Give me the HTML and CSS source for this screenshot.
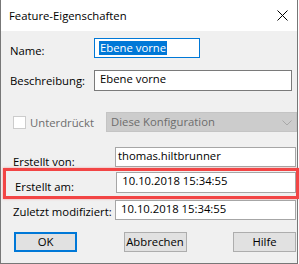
FILE: index.html
```html
<!DOCTYPE html>
<html lang="de">
<head>
  <meta charset="UTF-8">
  <title>Feature-Eigenschaften</title>
  <link rel="stylesheet" href="styles.css">
</head>
<body>

<div class="window">
  <div class="titlebar">
    <span class="title">Feature-Eigenschaften</span>
    <svg class="close" width="11" height="11" viewBox="0 0 11 11">
      <path d="M0.5 0.5 L10.5 10.5 M10.5 0.5 L0.5 10.5" stroke="#000" stroke-width="1"/>
    </svg>
  </div>

  <div class="content">
    <div class="row row-name">
      <span class="label">Name:</span>
      <div class="field field-name"><span class="selected">Ebene vorne</span></div>
    </div>

    <div class="row row-desc">
      <span class="label">Beschreibung:</span>
      <div class="field field-desc">Ebene vorne</div>
    </div>

    <div class="row row-suppress">
      <span class="checkbox"></span>
      <span class="check-label">Unterdrückt</span>
      <div class="combo">
        <span>Diese Konfiguration</span>
        <svg class="chevron" width="10" height="6" viewBox="0 0 10 6">
          <path d="M0.5 0.5 L5 5 L9.5 0.5" fill="none" stroke="#a8a8a8" stroke-width="1"/>
        </svg>
      </div>
    </div>

    <div class="row row-info row-first">
      <span class="label">Erstellt von:</span>
      <div class="field field-info field-user">thomas.hiltbrunner</div>
    </div>

    <div class="highlight">
      <div class="row row-info">
        <span class="label">Erstellt am:</span>
        <div class="field field-info">10.10.2018 15:34:55</div>
      </div>
    </div>

    <div class="row row-info row-last">
      <span class="label">Zuletzt modifiziert:</span>
      <div class="field field-info">10.10.2018 15:34:55</div>
    </div>

    <div class="buttons">
      <button class="btn btn-default">OK</button>
      <button class="btn">Abbrechen</button>
      <button class="btn">Hilfe</button>
    </div>
  </div>
</div>

</body>
</html>
```

FILE: styles.css
```css
* {
  box-sizing: border-box;
  margin: 0;
  padding: 0;
}

body {
  font-family: 'Open Sans', 'Noto Sans', sans-serif;
  font-size: 11.3px;
  line-height: 16px;
  color: #000;
  background: #fff;
}

.window {
  width: 298px;
  height: 264px;
  border: 1px solid #777;
  border-top: none;
  background-color: #f0f0f0;
  display: flex;
  flex-direction: column;
}

.titlebar {
  height: 31px;
  flex-shrink: 0;
  background-color: #fff;
  display: flex;
  align-items: flex-start;
  justify-content: space-between;
  padding: 8px 9px 0 8px;
}

.close {
  margin-top: 2px;
}

.content {
  flex: 1;
  display: flex;
  flex-direction: column;
}

.row {
  display: flex;
  align-items: flex-start;
  height: 20px;
  flex-shrink: 0;
}

.label {
  white-space: nowrap;
}

.field {
  height: 20px;
  background-color: #fff;
  border: 1px solid #7a7a7a;
  white-space: nowrap;
  overflow: hidden;
}

.row-name {
  margin-top: 7px;
  padding-left: 9px;
}

.row-name .label {
  width: 84px;
  margin-top: 5px;
}

.field-name {
  width: 106px;
  border-color: #0078d7;
  padding-left: 4px;
  padding-top: 1px;
}

.selected {
  display: inline-block;
  background-color: #0078d7;
  color: #fff;
  line-height: 14px;
  padding: 0 1px;
}

.row-desc {
  margin-top: 12px;
  height: 21px;
  padding-left: 9px;
}

.row-desc .label {
  width: 84px;
  margin-top: 3px;
}

.field-desc {
  height: 21px;
  width: 198px;
  padding-left: 5px;
}

.row-suppress {
  margin-top: 21px;
  padding-left: 12px;
}

.checkbox {
  width: 13px;
  height: 13px;
  border: 1px solid #cccccc;
  background-color: #fff;
  margin-top: 4px;
}

.check-label {
  color: #6d6d6d;
  margin: 3px 0 0 4px;
  width: 76px;
}

.combo {
  width: 191px;
  height: 20px;
  background-color: #cccccc;
  border: 1px solid #c4c4c4;
  color: #6d6d6d;
  display: flex;
  align-items: center;
  justify-content: space-between;
  padding: 0 4px 0 4px;
}

.chevron {
  margin-top: 1px;
}

.row-info {
  padding-left: 12px;
}

.row-info .label {
  width: 102px;
  margin-top: 7px;
}

.field-info {
  width: 181px;
  border-color: #a6a6a6;
  padding-left: 5px;
}

.field-user {
  padding-left: 2px;
}

.row-first {
  margin-top: 15px;
}

.highlight {
  flex-shrink: 0;
  margin: 1px 0 0 2px;
  width: 296px;
  height: 31px;
  border: 3px solid #f24545;
  box-shadow: 0 0 2px rgba(242, 69, 69, 0.5);
  padding-top: 1px;
}

.highlight .row-info {
  height: 21px;
  padding-left: 9px;
}

.highlight .field-info {
  height: 21px;
}

.row-last {
  margin-top: 1px;
}

.row-last .label {
  margin-top: 4px;
}

.buttons {
  margin-top: 12px;
  display: flex;
  justify-content: space-between;
  padding: 0 1px 0 13px;
}

.btn {
  width: 63px;
  height: 20px;
  font-family: inherit;
  font-size: inherit;
  line-height: 16px;
  background-color: #e1e1e1;
  border: 1px solid #adadad;
  color: #000;
}

.btn-default {
  border: 2px solid #0078d7;
}
```
